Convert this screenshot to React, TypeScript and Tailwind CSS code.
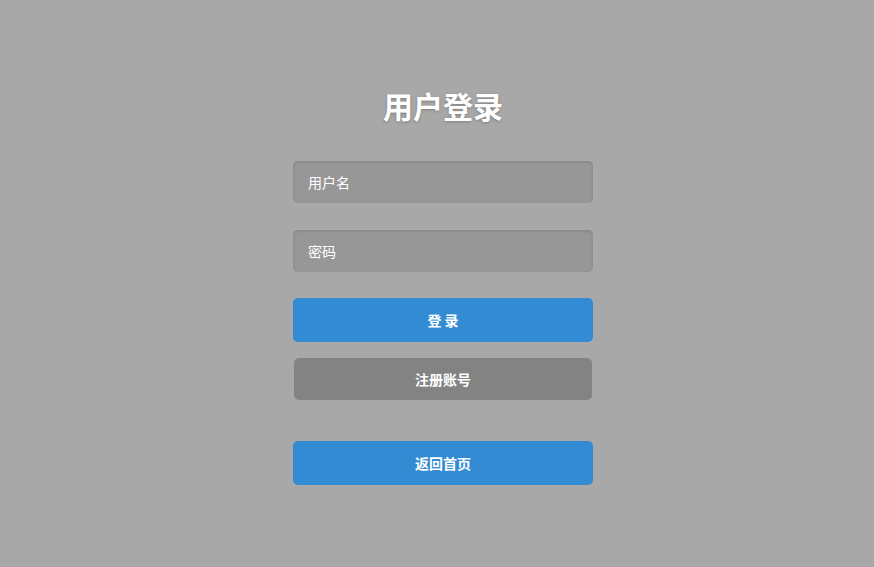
export default function App() {
  return (
    <div
      className="min-h-[567px] w-full bg-[#a8a8a8] flex justify-center pl-3"
      style={{ fontFamily: '"Noto Sans CJK SC", "Microsoft YaHei", sans-serif' }}
    >
      <div className="w-[300px] flex flex-col pt-[83px]">
        <h1 className="h-[45px] leading-[45px] text-center text-[30px] font-bold text-white [text-shadow:0_1px_3px_rgba(0,0,0,0.25)]">
          用户登录
        </h1>
        <div className="mt-[33px] h-[42px] rounded-[5px] bg-[#979797] shadow-[inset_0_1px_3px_rgba(0,0,0,0.14)] flex items-center pl-[15px] text-[14px] text-white">
          用户名
        </div>
        <div className="mt-[27px] h-[42px] rounded-[5px] bg-[#979797] shadow-[inset_0_1px_3px_rgba(0,0,0,0.14)] flex items-center pl-[15px] text-[14px] text-white">
          密码
        </div>
        <button className="mt-[26px] h-[44px] rounded-[5px] bg-[#338bd4] text-white text-[14px] font-bold">
          登 录
        </button>
        <button className="mt-[16px] mx-[1px] h-[42px] rounded-[5px] bg-[#838383] text-white text-[14px] font-bold">
          注册账号
        </button>
        <button className="mt-[41px] h-[44px] rounded-[5px] bg-[#338bd4] text-white text-[14px] font-bold">
          返回首页
        </button>
      </div>
    </div>
  );
}
